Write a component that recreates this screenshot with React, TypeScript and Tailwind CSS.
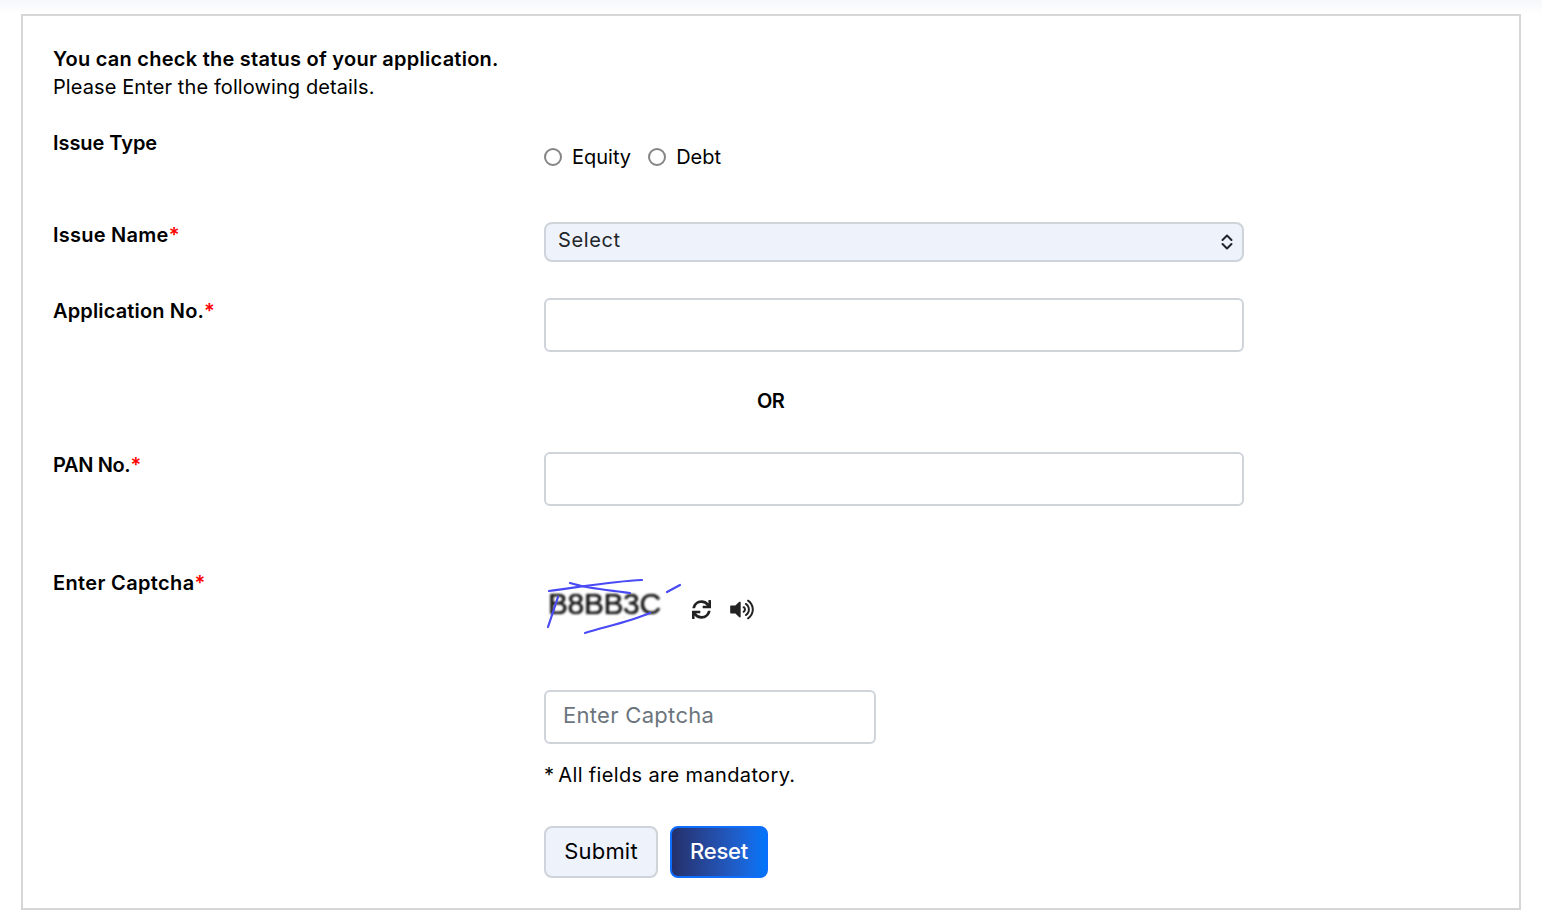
import type { ReactNode } from "react";
import { FaSync, FaVolumeUp } from "react-icons/fa";

function Req({ children, className }: { children: ReactNode; className: string }) {
  return (
    <label className={"text-[20px] leading-[28px] font-semibold text-black " + className}>
      {children}
      <span className="text-[#ff0000]">*</span>
    </label>
  );
}

function Radio({ label }: { label: string }) {
  return (
    <label className="flex items-center gap-[10px]">
      <input
        type="radio"
        name="issue"
        className="appearance-none w-[18px] h-[18px] rounded-full border-2 border-[#858585] bg-white"
      />
      <span className="text-[20px] leading-[28px] text-black">{label}</span>
    </label>
  );
}

export default function App() {
  return (
    <div
      className="h-[920px] overflow-hidden bg-gradient-to-b from-[#f5f7fa] to-white to-[14px] pt-[14px] pl-[21px] pr-[21px] text-black"
      style={{ fontFamily: '"Inter", "Liberation Sans", sans-serif' }}
    >
      <div className="border-2 border-[#d6d6d6] bg-white pt-[29px] pb-[30px] pl-[30px]">
        <p className="text-[20px] leading-[28px] font-semibold tracking-[0.25px]">You can check the status of your application.</p>
        <p className="text-[20px] leading-[28px] tracking-[0.1px]">Please Enter the following details.</p>

        <div className="grid grid-cols-[491px_700px] mt-[28px]">
          <label className="text-[20px] leading-[28px] font-semibold tracking-[-0.05px]">Issue Type</label>
          <div className="mt-[14px] flex items-center gap-[17px]">
            <Radio label="Equity" />
            <Radio label="Debt" />
          </div>
        </div>

        <div className="grid grid-cols-[491px_700px] mt-[50px]">
          <Req className="tracking-[0.25px]">Issue Name</Req>
          <div className="mt-[1px] h-[40px] rounded-[8px] border-2 border-[#ced4da] bg-[#eef2fb] flex items-center justify-between pl-[12px] pr-[7px]">
            <span className="text-[20px] leading-[28px] text-[#212529] tracking-[0.6px] -mt-[4px]">Select</span>
            <svg width="16" height="16" viewBox="0 0 16 16" fill="none" stroke="#212529" strokeWidth="2" strokeLinecap="round" strokeLinejoin="round">
              <path d="M3.5 6 8 1.5 12.5 6" />
              <path d="M3.5 10 8 14.500 12.5 10" />
            </svg>
          </div>
        </div>

        <div className="grid grid-cols-[491px_700px] mt-[35px]">
          <Req className="tracking-[0.15px]">Application No.</Req>
          <input type="text" className="mt-[1px] h-[54px] rounded-[6px] border-2 border-[#ced4da] bg-white" />
        </div>

        <div className="mt-[35px] pl-[704px] text-[20px] leading-[28px] font-semibold tracking-[-0.6px]">OR</div>

        <div className="grid grid-cols-[491px_700px] mt-[36px]">
          <Req className="tracking-[-0.35px]">PAN No.</Req>
          <input type="text" className="mt-[1px] h-[54px] rounded-[6px] border-2 border-[#ced4da] bg-white" />
        </div>

        <div className="grid grid-cols-[491px_700px] mt-[63px]">
          <Req className="tracking-[0.35px]">Enter Captcha</Req>
          <div className="mt-[6px] flex flex-col items-start">
            <div className="flex items-center h-[65px]">
              <div className="relative w-[137px] h-[65px]">
                <span
                  className="absolute left-[4px] top-[11px] text-[30px] leading-[36px] text-[#111] blur-[0.8px] tracking-[-0.4px] [text-shadow:0_0_1px_#111]"
                  style={{ fontFamily: '"Liberation Sans", sans-serif' }}
                >
                  B8BB3C
                </span>
                <svg className="absolute inset-0" width="137" height="65" viewBox="0 0 137 65" fill="none" stroke="#4a4af5" strokeWidth="2.200" strokeLinecap="round">
                  <path d="M5 16 C30 13 70 6 98 5" />
                  <path d="M26 8 C45 14 65 15 86 18" />
                  <path d="M14 22 L4 52" />
                  <path d="M41 58 C60 52 85 47 106 38" />
                  <path d="M123 17 L136 10" />
                </svg>
              </div>
              <FaSync className="ml-[11px] mt-[3px] text-[#222] w-[19px] h-[19px]" />
              <FaVolumeUp className="ml-[18px] mt-[4px] text-[#222] w-[26px] h-[21px]" />
            </div>

            <input
              type="text"
              placeholder="Enter Captcha"
              className="mt-[50px] w-[332px] h-[54px] rounded-[6px] border-2 border-[#ced4da] bg-white pl-[17px] pr-[18px] pb-[5px] text-[22px] tracking-[0.3px] placeholder:text-[#6c757d]"
            />
            <p className="mt-[17px] text-[20px] leading-[28px] tracking-[0.35px]">
              <span className="mr-[-2px]">*</span> All fields are mandatory.
            </p>
            <div className="mt-[37px] flex gap-[12px]">
              <button className="w-[114px] h-[52px] rounded-[8px] border-2 border-[#ced4da] bg-[#eef2fb] pb-[2px] text-[22px] tracking-[0.2px] text-black">Submit</button>
              <button className="w-[98px] h-[52px] rounded-[8px] border-2 border-[#0d6efd] bg-gradient-to-r from-[#25306b] to-[#0075fa] pb-[2px] text-[22px] font-medium tracking-[-0.2px] text-white">Reset</button>
            </div>
          </div>
        </div>
      </div>
    </div>
  );
}
